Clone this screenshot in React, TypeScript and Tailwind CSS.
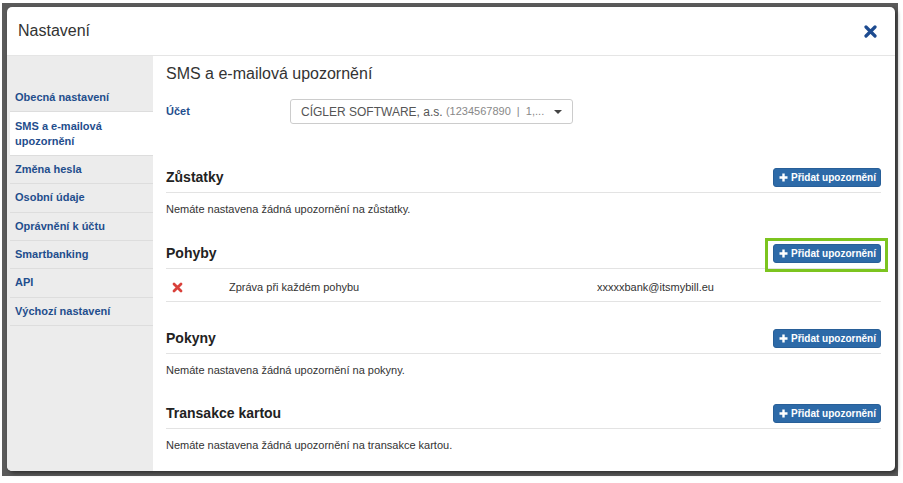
const menu = [
  "Obecná nastavení",
  "SMS a e-mailová upozornění",
  "Změna hesla",
  "Osobní údaje",
  "Oprávnění k účtu",
  "Smartbanking",
  "API",
  "Výchozí nastavení",
];

const font = { fontFamily: '"Liberation Sans", Arial, sans-serif' };

function AddButton({ highlight }: { highlight?: boolean }) {
  return (
    <div className="relative">
      <button className="flex h-[19px] items-center gap-[2px] rounded-[3px] border border-[#285f98] bg-[#2d6aa8] pl-[5px] pr-[4px] text-[10px] font-bold leading-none text-white">
        <svg width="9" height="9" viewBox="0 0 9 9" className="mr-[1px]">
          <path d="M4.5 0.5v8M0.5 4.5h8" stroke="white" strokeWidth="2.4" />
        </svg>
        Přidat upozornění
      </button>
      {highlight && (
        <span className="pointer-events-none absolute -bottom-[9px] -left-[8px] -right-[7px] -top-[6px] border-[3px] border-[#7cc41f]" />
      )}
    </div>
  );
}

function SectionHeader({ title, highlight }: { title: string; highlight?: boolean }) {
  return (
    <div className="flex h-[30px] items-center justify-between border-b border-[#e3e3e3]">
      <h3 className="text-[14px] font-bold text-[#222]">{title}</h3>
      <AddButton highlight={highlight} />
    </div>
  );
}

function Empty({ text }: { text: string }) {
  return <p className="pt-[9px] text-[11px] leading-[15px] text-[#333]">{text}</p>;
}

export default function App() {
  return (
    <div className="h-[483px] w-[903px] overflow-hidden bg-white" style={font}>
      <div className="ml-[2px] mt-[3px] h-[473px] w-[896px] bg-[#5b5b5b] pl-[5px] pt-[4px]">
        <div className="flex h-[464px] w-[888px] flex-col overflow-hidden rounded-[5px] bg-white shadow-[2px_2px_4px_rgba(0,0,0,0.5)]">
          {/* Header */}
          <div className="flex h-[49px] shrink-0 items-center justify-between border-b border-[#e5e5e5] pl-[11px] pr-[18px]">
            <h2 className="text-[16px] text-[#333]">Nastavení</h2>
            <svg width="13" height="13" viewBox="0 0 13 13">
              <path d="M2 2l9 9M11 2l-9 9" stroke="#1d4b90" strokeWidth="3.2" strokeLinecap="round" />
            </svg>
          </div>

          <div className="flex flex-1">
            {/* Sidebar */}
            <aside className="w-[146px] shrink-0 bg-[#ececec] pt-[28px]">
              <ul className="ml-[3px]">
                {menu.map((item, idx) => (
                  <li
                    key={item}
                    className={`border-b border-[#dddddd] px-[5px] py-[6.2px] text-[11px] font-bold leading-[15px] text-[#1f4e8d] ${
                      idx === 1 ? "bg-white" : ""
                    }`}
                  >
                    {item}
                  </li>
                ))}
              </ul>
            </aside>

            {/* Content */}
            <main className="flex-1 pl-[13px] pr-[14px] pt-[8px]">
              <h1 className="text-[16px] leading-[20px] text-[#333]">SMS a e-mailová upozornění</h1>

              <div className="mt-[15px] flex items-center">
                <label className="w-[124px] text-[11px] font-bold text-[#1f4e8d]">Účet</label>
                <div className="flex h-[25px] w-[283px] items-center rounded-[3px] border border-[#cccccc] pl-[10px] pr-[10px]">
                  <span className="whitespace-pre text-[12px] text-[#555]">CÍGLER SOFTWARE, a.s. </span>
                  <span className="whitespace-pre text-[11px] text-[#888]">(1234567890  |  1,...</span>
                  <span className="ml-auto h-0 w-0 border-x-[4px] border-t-[4px] border-x-transparent border-t-[#444]" />
                </div>
              </div>

              <div className="mt-[39px]">
                <SectionHeader title="Zůstatky" />
                <Empty text="Nemáte nastavena žádná upozornění na zůstatky." />

                <div className="mt-[22px]">
                  <SectionHeader title="Pohyby" highlight />
                  <div className="flex h-[33px] items-center border-b border-[#e3e3e3] pt-[5px] text-[11px] text-[#333]">
                    <div className="w-[63px] pl-[6px]">
                      <svg width="11" height="11" viewBox="0 0 11 11">
                        <path d="M2 2l7 7M9 2l-7 7" stroke="#d9413b" strokeWidth="2.8" strokeLinecap="round" />
                      </svg>
                    </div>
                    <span className="w-[368px]">Zpráva při každém pohybu</span>
                    <span>xxxxxbank@itsmybill.eu</span>
                  </div>
                </div>

                <div className="mt-[22px]">
                  <SectionHeader title="Pokyny" />
                  <Empty text="Nemáte nastavena žádná upozornění na pokyny." />
                </div>

                <div className="mt-[21px]">
                  <SectionHeader title="Transakce kartou" />
                  <Empty text="Nemáte nastavena žádná upozornění na transakce kartou." />
                </div>
              </div>
            </main>
          </div>
        </div>
      </div>
    </div>
  );
}
